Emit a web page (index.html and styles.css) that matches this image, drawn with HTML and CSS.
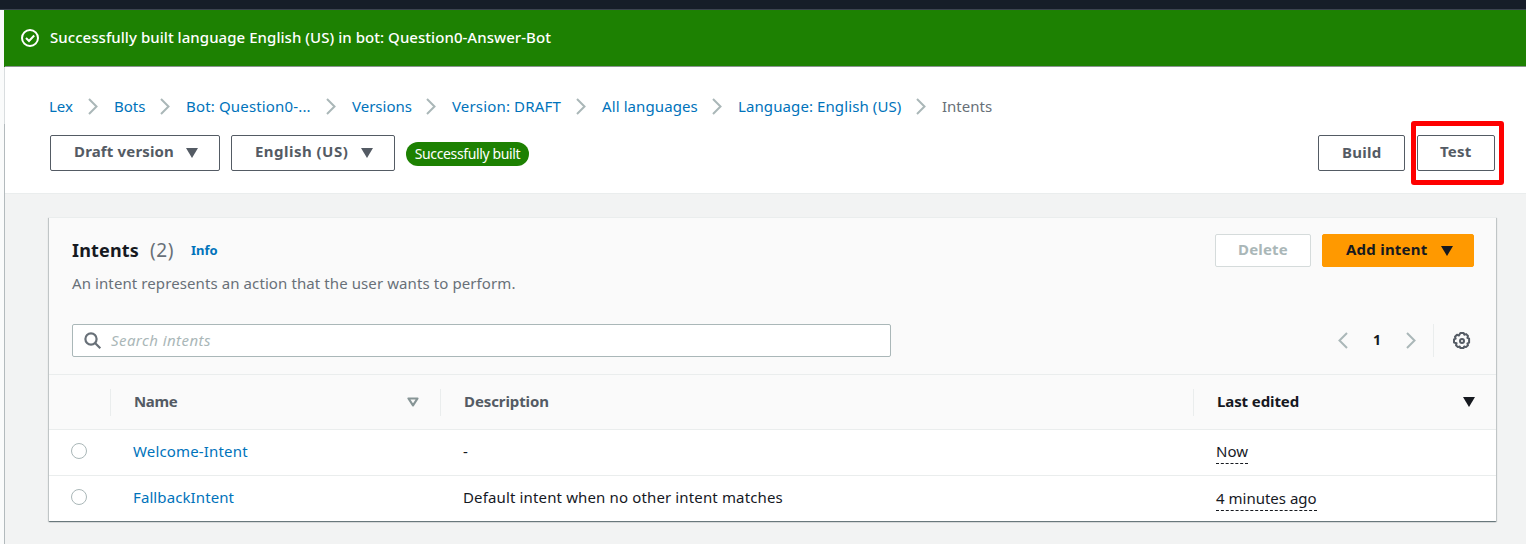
FILE: index.html
```
<!DOCTYPE html>
<html lang="en">
<head>
<meta charset="utf-8">
<title>Intents</title>
<link rel="stylesheet" href="styles.css">
</head>
<body>
<div class="topbar"></div>
<div class="shell">
  <div class="rail"><div class="rail-top"></div><div class="rail-mid"></div><div class="rail-low"></div></div>
  <main class="main">
    <div class="flash">
      <svg class="flash-icon" width="18" height="18" viewBox="0 0 18 18" fill="none" stroke="#fff" stroke-width="2"><circle cx="9" cy="9" r="8"/><path d="M5 9l3 3 5.200-5.500"/></svg>
      <span class="flash-text">Successfully built language English (US) in bot: Question0-Answer-Bot</span>
    </div>
    <header class="header">
      <nav class="crumbs">
        <a>Lex</a><svg class="chev" viewBox="0 0 10 17"><path d="M1 1l7.500 7.500L1 16"/></svg>
        <a>Bots</a><svg class="chev" viewBox="0 0 10 17"><path d="M1 1l7.500 7.500L1 16"/></svg>
        <a class="ls-wide">Bot: Question0-...</a><svg class="chev" viewBox="0 0 10 17"><path d="M1 1l7.500 7.500L1 16"/></svg>
        <a>Versions</a><svg class="chev" viewBox="0 0 10 17"><path d="M1 1l7.500 7.500L1 16"/></svg>
        <a class="ls-wide">Version: DRAFT</a><svg class="chev" viewBox="0 0 10 17"><path d="M1 1l7.500 7.500L1 16"/></svg>
        <a class="ls">All languages</a><svg class="chev" viewBox="0 0 10 17"><path d="M1 1l7.500 7.500L1 16"/></svg>
        <a class="ls">Language: English (US)</a><svg class="chev" viewBox="0 0 10 17"><path d="M1 1l7.500 7.500L1 16"/></svg>
        <span class="current">Intents</span>
      </nav>
      <div class="actions">
        <button class="btn btn-version">Draft version<svg class="caret" viewBox="0 0 12 10"><path d="M0 0h12L6 10z"/></svg></button>
        <button class="btn btn-language"><span class="ls-lang">English (US)</span><svg class="caret" viewBox="0 0 12 10"><path d="M0 0h12L6 10z"/></svg></button>
        <span class="badge">Successfully built</span>
        <button class="btn btn-build">Build</button>
        <div class="highlight"><button class="btn btn-test">Test</button></div>
      </div>
    </header>
    <section class="card">
      <div class="card-head">
        <div class="title-row">
          <h2 class="title">Intents</h2><span class="count">(2)</span><a class="info">Info</a>
          <button class="btn btn-delete">Delete</button>
          <button class="btn btn-add">Add intent<svg class="caret" viewBox="0 0 12 10"><path d="M0 0h12L6 10z"/></svg></button>
        </div>
        <p class="desc">An intent represents an action that the user wants to perform.</p>
        <div class="tools">
          <div class="search">
            <svg width="18" height="18" viewBox="0 0 18 18" fill="none" stroke="#687078" stroke-width="2.200"><circle cx="7" cy="7" r="5.600"/><path d="M11 11l5.300 5.300"/></svg>
            <span class="placeholder">Search intents</span>
          </div>
          <div class="pager">
            <svg class="chev" viewBox="0 0 10 17"><path d="M9 1L1.500 8.500 9 16"/></svg>
            <span class="page">1</span>
            <svg class="chev" viewBox="0 0 10 17"><path d="M1 1l7.500 7.500L1 16"/></svg>
          </div>
          <div class="settings">
            <svg width="18" height="18" viewBox="0 0 18 18" fill="none" stroke="#545b64" stroke-width="2" stroke-linejoin="round"><path d="M7.400 1h3.200l.7 1.700 1.900-.6 1.800 1.900-.6 1.800 1.700.9v4l-1.700.7.600 1.800-2 1.900-1.800-.6-.7 1.600H7.400l-.7-1.600-1.800.6-1.900-1.900.6-1.900L1 10.600V7.400l1.700-.8-.7-1.800 2-2 1.900.7z"/><circle cx="9" cy="9" r="2"/></svg>
          </div>
        </div>
      </div>
      <div class="row thead">
        <div></div>
        <div class="th th-name"><span class="name-head">Name</span><svg width="12" height="10" viewBox="0 0 12 10" fill="none" stroke="#879596" stroke-width="2.200" stroke-linejoin="round"><path d="M1.500 1.500h9L6 8.300z"/></svg></div>
        <div class="th">Description</div>
        <div class="th sorted">Last edited<svg class="caret" viewBox="0 0 12 10"><path d="M0 0h12L6 10z"/></svg></div>
      </div>
      <div class="row">
        <div class="pick"><span class="radio"></span></div>
        <div class="td"><a class="ls-wide">Welcome-Intent</a></div>
        <div class="td">-</div>
        <div class="td"><span class="time">Now</span></div>
      </div>
      <div class="row last">
        <div class="pick"><span class="radio"></span></div>
        <div class="td"><a class="ls">FallbackIntent</a></div>
        <div class="td ls-text">Default intent when no other intent matches</div>
        <div class="td"><span class="time">4 minutes ago</span></div>
      </div>
    </section>
  </main>
</div>
</body>
</html>
```

FILE: styles.css
```
* { box-sizing: border-box; }
body {
  margin: 0;
  height: 544px;
  overflow: hidden;
  background: #f2f3f3;
  color: #16191f;
  font: 15px/20px "Noto Sans", "Open Sans", sans-serif;
}
svg { display: block; flex: none; }
a { color: #0073bb; }
.topbar { height: 10px; background: #161e28; border-bottom: 1px solid #3c4450; }
.shell { display: flex; height: 534px; }
.rail { width: 5px; flex: none; display: flex; flex-direction: column; background: #fafbfb; }
.rail-top { height: 57px; border-right: 1px solid #1d8102; }
.rail-mid { height: 57px; border-right: 1px solid #d9dddf; }
.rail-low { flex: 1; border-right: 1px solid #b3babd; }
.main { flex: 1; min-width: 0; }

.flash {
  height: 57px;
  padding: 0 0 1px 16px;
  display: flex;
  align-items: center;
  gap: 11px;
  background: #1d8102;
  border-bottom: 1px solid #8a9490;
  color: #fff;
}
.flash-text { font-weight: 500; letter-spacing: .048px; margin-top: -1px; }

.header { height: 127px; padding: 29px 23px 0 45px; background: #fff; border-bottom: 1px solid #eaeded; }
.crumbs {
  display: grid;
  grid-template-columns: 39px 26px 46px 26px 140px 26px 74px 26px 124px 26px 110px 26px 178px 26px auto;
  align-items: center;
  height: 20px;
  margin-left: -1px;
  white-space: nowrap;
}
.chev { width: 10px; height: 17px; fill: none; stroke: #aab7b8; stroke-width: 2; }
.crumbs .chev { margin-top: 1px; }
.current { color: #687078; }
.ls { letter-spacing: .1px; }
.ls-wide { letter-spacing: .16px; }
.ls-text { letter-spacing: .14px; }
.ls-lang { letter-spacing: .47px; }

.actions { height: 64px; margin-top: 5px; display: flex; align-items: center; }
.btn {
  display: flex;
  align-items: center;
  height: 36px;
  padding: 0 0 4px 23px;
  border: 1px solid #545b64;
  border-radius: 2px;
  background: #fff;
  color: #545b64;
  font: 700 15px/20px "Noto Sans", "Open Sans", sans-serif;
  letter-spacing: .16px;
  white-space: nowrap;
}
.caret { width: 12px; height: 10px; fill: currentColor; margin-top: 3px; }
.btn-version { width: 170px; }
.btn-version .caret { margin-left: 12px; }
.btn-language { width: 164px; margin-left: 11px; }
.btn-language .caret { margin-left: 13px; }
.badge {
  width: 123px;
  height: 24px;
  margin: 1px auto 0 11px;
  border-radius: 12px;
  background: #1d8102;
  color: #fff;
  font-size: 14px;
  line-height: 23px;
  letter-spacing: -.37px;
  text-align: center;
  white-space: nowrap;
}
.btn-build { width: 87px; padding-bottom: 3px; letter-spacing: .25px; }
.highlight {
  width: 93px;
  height: 64px;
  margin-left: 6px;
  margin-right: -1px;
  padding: 9px 0 0 1px;
  border: 5px solid #fe0000;
  border-radius: 3px;
}
.btn-test { width: 78px; padding-left: 22px; letter-spacing: .22px; }

.card {
  height: 304px;
  margin: 23px 30px 0 44px;
  background: #fff;
  border-top: 1px solid #eaeded;
  box-shadow: 0 1px 1px 0 rgba(0,28,36,.4), 1px 1px 1px 0 rgba(0,28,36,.15), -1px 1px 1px 0 rgba(0,28,36,.15);
}
.card-head { height: 156px; padding: 16px 22px 0 23px; background: #fafafa; }
.title-row { height: 33px; display: flex; align-items: center; }
.title { margin: -2px 0 0; font-size: 18px; line-height: 24px; letter-spacing: .17px; }
.count { margin: -2px 0 0 11px; font-size: 19px; line-height: 24px; letter-spacing: .55px; color: #687078; }
.info { margin: -2px 0 0 17px; font-size: 13px; font-weight: 700; }
.btn-delete { width: 96px; height: 33px; margin-left: auto; padding: 0 0 3px 22px; border-color: #d5dbdb; color: #aab7b8; }
.btn-add { width: 152px; height: 33px; margin-left: 11px; padding: 0 0 3px 23px; border-color: #ff9900; background: #ff9900; color: #16191f; letter-spacing: .23px; }
.btn-add .caret { margin-left: 13px; }
.desc { margin: 6px 0 0; letter-spacing: .095px; color: #687078; }
.tools { height: 33px; margin-top: 31px; display: flex; align-items: center; }
.search {
  width: 819px;
  height: 33px;
  padding-left: 11px;
  display: flex;
  align-items: center;
  gap: 9px;
  background: #fff;
  border: 1px solid #aab7b8;
  border-radius: 2px;
}
.placeholder { margin-top: -2px; color: #aab7b8; font-style: italic; letter-spacing: .43px; }
.pager { margin-left: auto; width: 78px; display: flex; align-items: center; justify-content: space-between; }
.page { margin-top: -2px; font-size: 14px; font-weight: 700; }
.settings { width: 41px; height: 33px; margin-left: 17px; padding-left: 19px; display: flex; align-items: center; border-left: 1px solid #eaeded; }

.row {
  display: grid;
  grid-template-columns: 61px 330px 753px 1fr;
  align-items: center;
  height: 46px;
  padding-bottom: 4px;
  border-bottom: 1px solid #eaeded;
}
.thead { height: 56px; padding: 0; background: #fafafa; border-top: 1px solid #eaeded; font-weight: 700; color: #545b64; }
.th { height: 27px; padding: 0 22px 3px 23px; display: flex; align-items: center; justify-content: space-between; border-left: 1px solid #eaeded; letter-spacing: -.1px; }
.th svg { margin-top: 2px; }
.th-name { padding-right: 21px; }
.name-head { letter-spacing: -.35px; }
.sorted { color: #16191f; padding-right: 21px; }
.td { padding-left: 23px; line-height: 20px; white-space: nowrap; }
.last { height: 45px; padding-bottom: 3px; border-bottom: 0; }
.pick { padding-left: 22px; }
.radio { display: block; width: 16px; height: 16px; border: 1px solid #aab7b8; border-radius: 50%; background: #fff; }
.time { display: inline-block; height: 24px; margin-top: 3px; line-height: 22px; border-bottom: 1px dashed #16191f; }
```
